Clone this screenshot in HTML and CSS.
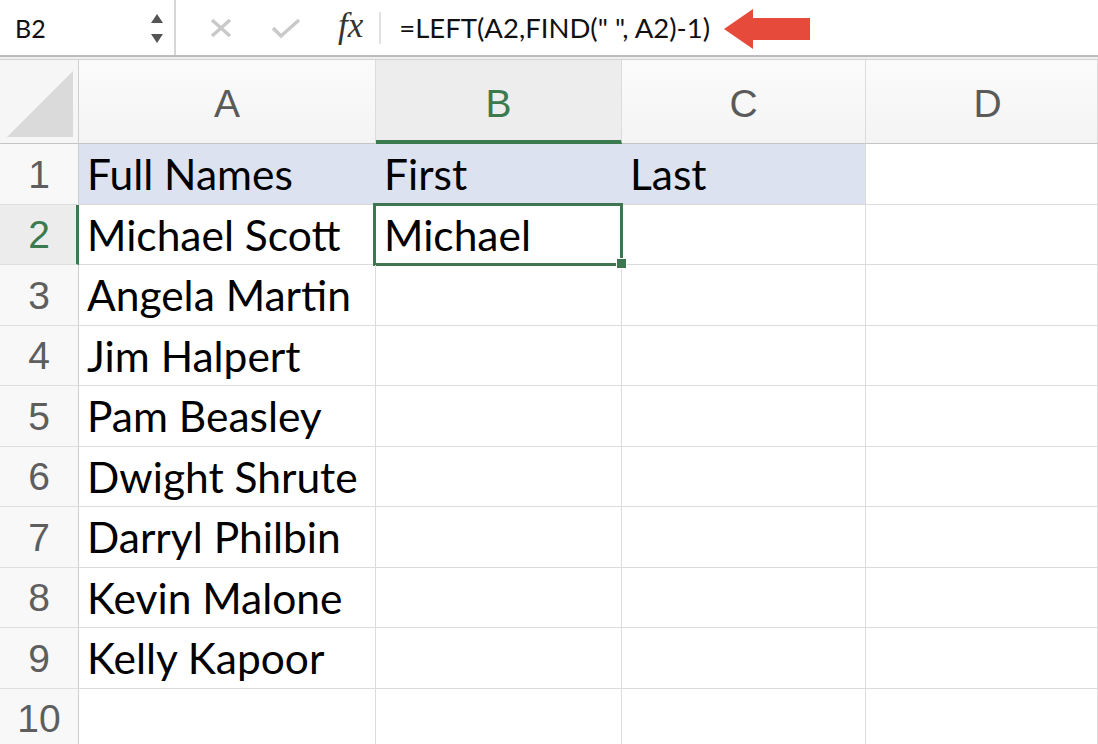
FILE: index.html
```html
<!DOCTYPE html>
<html>
<head>
<meta charset="utf-8">
<link rel="stylesheet" href="styles.css">
</head>
<body>
<div class="app">
  <div class="formula-bar">
    <div class="name-box">
      <span class="name-text">B2</span>
      <span class="spinner">
        <svg width="14" height="32" viewBox="0 0 14 32"><polygon points="7,1 13,10 1,10" fill="#555"/><polygon points="1,21 13,21 7,30" fill="#555"/></svg>
      </span>
    </div>
    <div class="fb-icons">
      <svg class="ic-x" width="24" height="20" viewBox="0 0 24 20"><path d="M3 2 L21 18 M21 2 L3 18" stroke="#c9c9c9" stroke-width="3.4" fill="none"/></svg>
      <svg class="ic-check" width="30" height="20" viewBox="0 0 30 20"><path d="M2 10 L10 18 L28 2" stroke="#c9c9c9" stroke-width="3.4" fill="none"/></svg>
      <span class="fx">fx</span>
      <span class="sep"></span>
    </div>
    <div class="formula">=LEFT(A2,FIND(" ", A2)-1)</div>
    <svg class="arrow" width="88" height="44" viewBox="0 0 88 44"><polygon points="0,22 29,2 29,11 86,11 86,33 29,33 29,42" fill="#e64a3b"/></svg>
  </div>
  <div class="fb-gap"></div>
  <div class="sheet">
    <div class="corner"><svg width="66" height="66" viewBox="0 0 66 66"><polygon points="0,66 66,66 66,0" fill="#dadada"/></svg></div>
    <div class="colhead">A</div>
    <div class="colhead sel">B</div>
    <div class="colhead">C</div>
    <div class="colhead last">D</div>

    <div class="rowhead">1</div>
    <div class="cell fill">Full Names</div>
    <div class="cell fill">First</div>
    <div class="cell fill fill-end">Last</div>
    <div class="cell"></div>

    <div class="rowhead sel">2</div>
    <div class="cell">Michael Scott</div>
    <div class="cell active">Michael<span class="handle"></span></div>
    <div class="cell"></div>
    <div class="cell"></div>

    <div class="rowhead">3</div>
    <div class="cell">Angela Martin</div>
    <div class="cell"></div>
    <div class="cell"></div>
    <div class="cell"></div>

    <div class="rowhead">4</div>
    <div class="cell">Jim Halpert</div>
    <div class="cell"></div>
    <div class="cell"></div>
    <div class="cell"></div>

    <div class="rowhead">5</div>
    <div class="cell">Pam Beasley</div>
    <div class="cell"></div>
    <div class="cell"></div>
    <div class="cell"></div>

    <div class="rowhead">6</div>
    <div class="cell">Dwight Shrute</div>
    <div class="cell"></div>
    <div class="cell"></div>
    <div class="cell"></div>

    <div class="rowhead">7</div>
    <div class="cell">Darryl Philbin</div>
    <div class="cell"></div>
    <div class="cell"></div>
    <div class="cell"></div>

    <div class="rowhead">8</div>
    <div class="cell">Kevin Malone</div>
    <div class="cell"></div>
    <div class="cell"></div>
    <div class="cell"></div>

    <div class="rowhead">9</div>
    <div class="cell">Kelly Kapoor</div>
    <div class="cell"></div>
    <div class="cell"></div>
    <div class="cell"></div>

    <div class="rowhead">10</div>
    <div class="cell"></div>
    <div class="cell"></div>
    <div class="cell"></div>
    <div class="cell"></div>
  </div>
</div>
</body>
</html>
```
FILE: styles.css
```css
html, body {
  margin: 0;
  padding: 0;
  background: #ffffff;
  overflow: hidden;
}
.app {
  width: 1098px;
  height: 744px;
  overflow: hidden;
  font-family: Lato, "Open Sans", sans-serif;
}
.formula-bar {
  height: 55px;
  display: flex;
  align-items: center;
  background: #ffffff;
  border-bottom: 2px solid #bcbcbc;
}
.name-box {
  width: 176px;
  height: 55px;
  box-sizing: border-box;
  border-right: 2px solid #d6d6d6;
  display: flex;
  align-items: center;
  justify-content: space-between;
  padding: 0 10px 0 15px;
}
.name-text {
  font-size: 25px;
  color: #111;
}
.spinner {
  display: flex;
  align-items: center;
  padding-top: 2px;
}
.fb-icons {
  display: flex;
  align-items: center;
  height: 55px;
  padding-left: 33px;
}
.ic-x { margin-right: 38px; }
.ic-check { margin-right: 37px; }
.fx {
  font-family: "Liberation Serif", "DejaVu Serif", serif;
  font-style: italic;
  font-size: 35px;
  color: #333;
  margin-top: -4px;
}
.sep {
  width: 2px;
  height: 32px;
  background: #e2e2e2;
  margin-left: 16px;
}
.formula {
  font-size: 27.5px;
  color: #111;
  margin-left: 18px;
  white-space: pre;
}
.arrow {
  margin-left: 14px;
  margin-top: 2px;
}
.fb-gap {
  height: 2px;
  background: #efefef;
  border-bottom: 1px solid #d2d2d2;
}
.sheet {
  display: grid;
  grid-template-columns: 79px 297px 246px 244px 1fr;
  grid-template-rows: 84px repeat(10, 60.5px);
}
.corner {
  background: #f6f6f6;
  border-right: 1px solid #cfcfcf;
  border-bottom: 1px solid #c4c4c4;
  display: flex;
  align-items: flex-end;
  justify-content: flex-end;
  padding: 0 5px 6px 0;
}
.colhead {
  background: linear-gradient(#fbfbfb, #f4f4f4);
  border-right: 1px solid #dcdcdc;
  border-bottom: 1px solid #c4c4c4;
  display: flex;
  align-items: center;
  justify-content: center;
  font-family: "Liberation Sans", Arial, sans-serif;
  font-size: 39px;
  color: #5a5a5a;
  padding-top: 5px;
}
.colhead.last {
  padding-left: 12px;
}
.colhead.sel {
  background: #ededed;
  color: #3a7a4e;
  border-bottom: 4px solid #3a7a4e;
  padding-top: 8px;
}
.rowhead {
  background: #f8f8f8;
  border-right: 1px solid #cfcfcf;
  border-bottom: 1px solid #dedede;
  display: flex;
  align-items: center;
  justify-content: center;
  font-family: "Liberation Sans", Arial, sans-serif;
  font-size: 39px;
  color: #5e5e5e;
  padding-top: 2px;
}
.rowhead.sel {
  background: #ececec;
  color: #3a7a4e;
  border-right: 3px solid #3a7a4e;
  padding-left: 2px;
}
.cell {
  position: relative;
  border-right: 1px solid #dcdcdc;
  border-bottom: 1px solid #dcdcdc;
  display: flex;
  align-items: center;
  padding-left: 8px;
  font-size: 42.5px;
  color: #000;
  white-space: nowrap;
}
.cell.fill {
  background: #dce2f0;
  border-right-color: #dce2f0;
  border-bottom-color: #d6d6d6;
}
.cell.fill-end {
  border-right-color: #dcdcdc;
}
.cell.active::after {
  content: "";
  position: absolute;
  top: -2px;
  left: -3px;
  right: -2px;
  bottom: -2px;
  border: 3px solid #3f7550;
  pointer-events: none;
}
.handle {
  position: absolute;
  right: -6px;
  bottom: -5px;
  width: 9px;
  height: 9px;
  background: #3f7550;
  border: 1px solid #ffffff;
  z-index: 2;
}
```
